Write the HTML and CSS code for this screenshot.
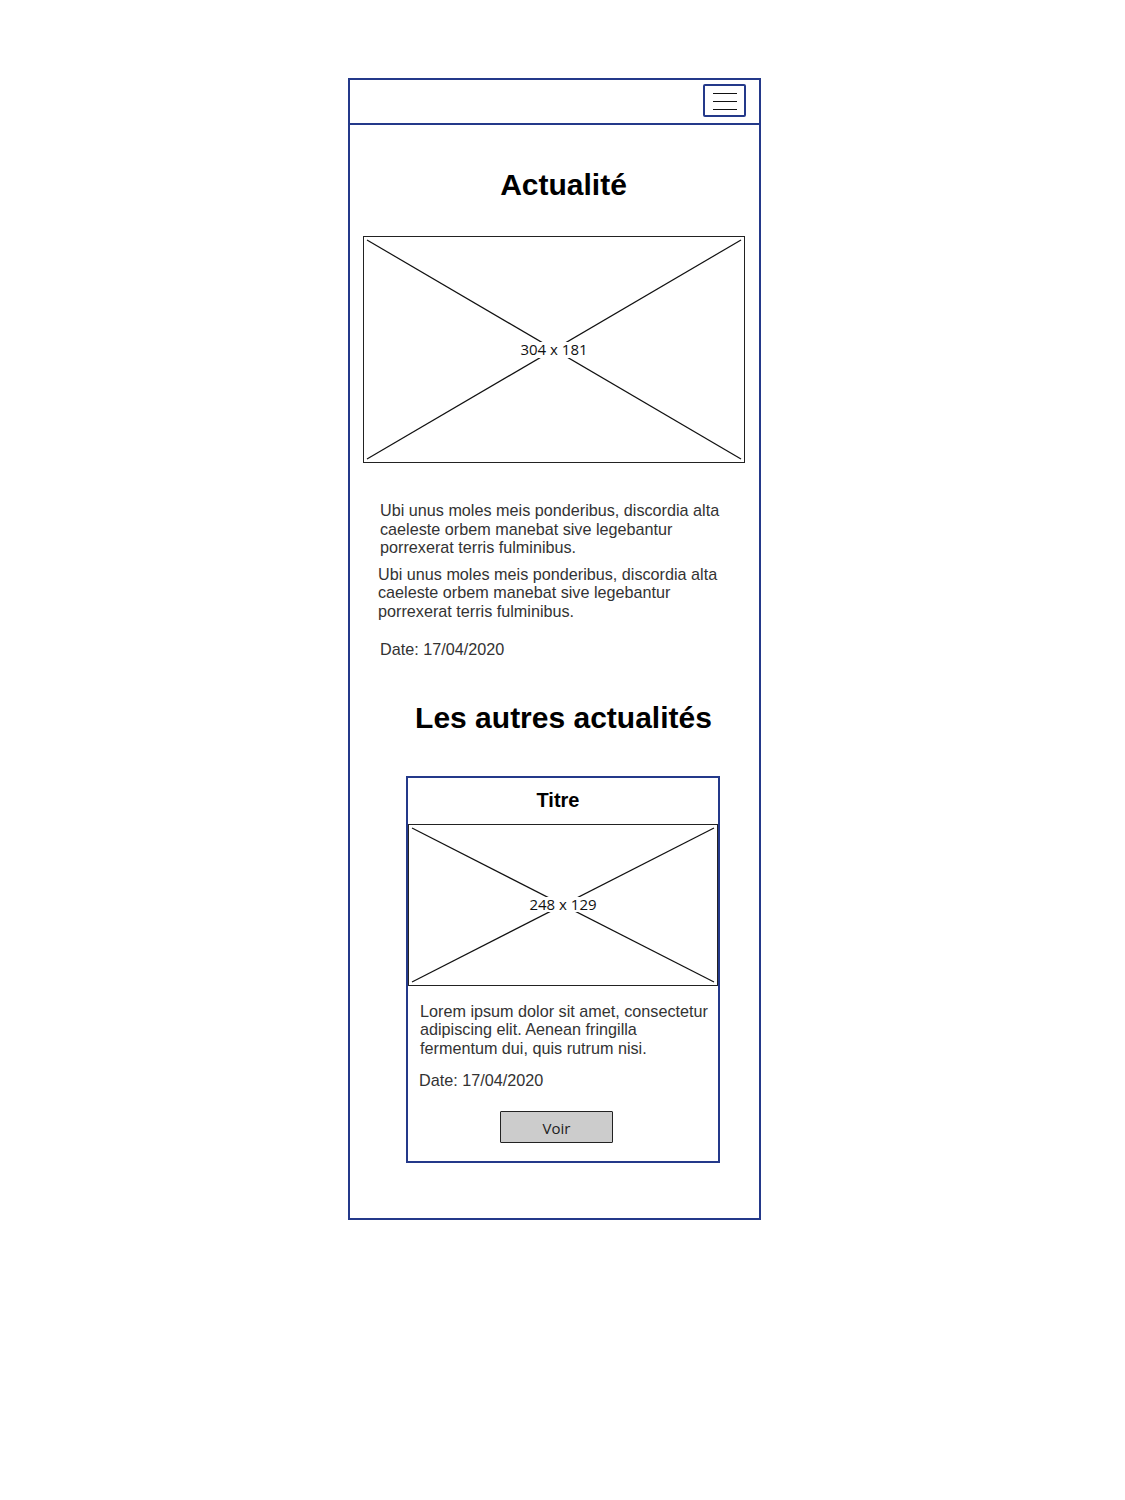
FILE: index.html
```html
<!DOCTYPE html>
<html lang="fr">
<head>
  <meta charset="UTF-8">
  <title>Actualité</title>
  <link rel="stylesheet" href="styles.css">
</head>
<body>
  <div class="phone">
    <div class="topbar">
      <div class="burger">
        <span></span>
        <span></span>
        <span></span>
      </div>
    </div>

    <h1 class="page-title">Actualité</h1>

    <svg class="placeholder main-img" width="382" height="227" viewBox="0 0 382 227">
      <rect x="0.5" y="0.5" width="381" height="226" fill="#fff" stroke="#222"/>
      <line x1="4" y1="4" x2="378" y2="223" class="ph-line"/>
      <line x1="378" y1="4" x2="4" y2="223" class="ph-line"/>
      <rect x="150" y="106" width="82" height="16" fill="#fff"/>
      <text x="191" y="119" text-anchor="middle" class="ph-label">304 x 181</text>
    </svg>

    <p class="lead">Ubi unus moles meis ponderibus, discordia alta caeleste orbem manebat sive legebantur porrexerat terris fulminibus.</p>
    <p class="lead second">Ubi unus moles meis ponderibus, discordia alta caeleste orbem manebat sive legebantur porrexerat terris fulminibus.</p>
    <p class="date">Date: 17/04/2020</p>

    <h2 class="page-title others">Les autres actualités</h2>

    <div class="card">
      <div class="card-title">Titre</div>
      <svg class="placeholder" width="310" height="162" viewBox="0 0 310 162">
        <rect x="0.5" y="0.5" width="309" height="161" fill="#fff" stroke="#222"/>
        <line x1="4" y1="4" x2="306" y2="158" class="ph-line"/>
        <line x1="306" y1="4" x2="4" y2="158" class="ph-line"/>
        <rect x="115" y="73" width="80" height="15" fill="#fff"/>
        <text x="155" y="86" text-anchor="middle" class="ph-label">248 x 129</text>
      </svg>
      <p class="card-text">Lorem ipsum dolor sit amet, consectetur adipiscing elit. Aenean fringilla fermentum dui, quis rutrum nisi.</p>
      <p class="card-date">Date: 17/04/2020</p>
      <button class="voir-btn">Voir</button>
    </div>
  </div>
</body>
</html>
```

FILE: styles.css
```css
:root {
  --wf-blue: #24398a;
  --wf-text: #333;
}
body {
  margin: 0;
  background: #fff;
  font-family: 'Liberation Sans', Arial, sans-serif;
}
.phone {
  box-sizing: border-box;
  width: 413px;
  height: 1142px;
  margin: 78px 0 0 348px;
  border: 2px solid var(--wf-blue);
  display: flex;
  flex-direction: column;
  align-items: flex-start;
}
.topbar {
  box-sizing: border-box;
  width: 100%;
  height: 45px;
  border-bottom: 2px solid var(--wf-blue);
  display: flex;
  justify-content: flex-end;
  padding: 4px 13px 0 0;
}
.burger {
  box-sizing: border-box;
  width: 43px;
  height: 33px;
  border: 2px solid var(--wf-blue);
  border-radius: 2px;
  display: flex;
  flex-direction: column;
  align-items: center;
  gap: 7px;
  padding-top: 7px;
}
.burger span {
  display: block;
  width: 24px;
  height: 1px;
  background: #111;
}
.page-title {
  align-self: stretch;
  margin: 43px 0 0;
  padding-left: 18px;
  text-align: center;
  font-size: 30px;
  line-height: 34px;
  font-weight: bold;
  color: #000;
}
.placeholder {
  display: block;
}
.main-img {
  margin: 34px 0 0 13px;
}
.ph-line {
  stroke: #111;
  stroke-width: 1.2;
}
.ph-label {
  font-family: 'Open Sans', 'DejaVu Sans', sans-serif;
  font-size: 15px;
  fill: #111;
}
.lead {
  width: 355px;
  margin: 38px 0 0 30px;
  font-size: 16.2px;
  line-height: 18.5px;
  color: var(--wf-text);
}
.lead.second {
  margin: 8px 0 0 28px;
}
.date {
  margin: 20px 0 0 30px;
  font-size: 16.2px;
  line-height: 18.5px;
  color: var(--wf-text);
}
.others {
  margin-top: 42px;
}
.card {
  box-sizing: border-box;
  width: 314px;
  height: 387px;
  margin: 41px 0 0 56px;
  border: 2px solid var(--wf-blue);
  display: flex;
  flex-direction: column;
  align-items: flex-start;
}
.card-title {
  align-self: stretch;
  height: 46px;
  line-height: 44px;
  padding-right: 10px;
  text-align: center;
  font-size: 20px;
  font-weight: bold;
  color: #000;
}
.card-text {
  width: 295px;
  margin: 16px 0 0 12px;
  font-size: 16.2px;
  line-height: 18.5px;
  color: var(--wf-text);
}
.card-date {
  margin: 14px 0 0 11px;
  font-size: 16.2px;
  line-height: 18.5px;
  color: var(--wf-text);
}
.voir-btn {
  box-sizing: border-box;
  width: 113px;
  height: 32px;
  margin: 21px 0 0 92px;
  background: #cccccc;
  border: 1px solid #222;
  border-radius: 1px;
  font-family: 'Open Sans', 'DejaVu Sans', sans-serif;
  font-size: 15px;
  color: #222;
  padding: 2px 0 0;
}
```
